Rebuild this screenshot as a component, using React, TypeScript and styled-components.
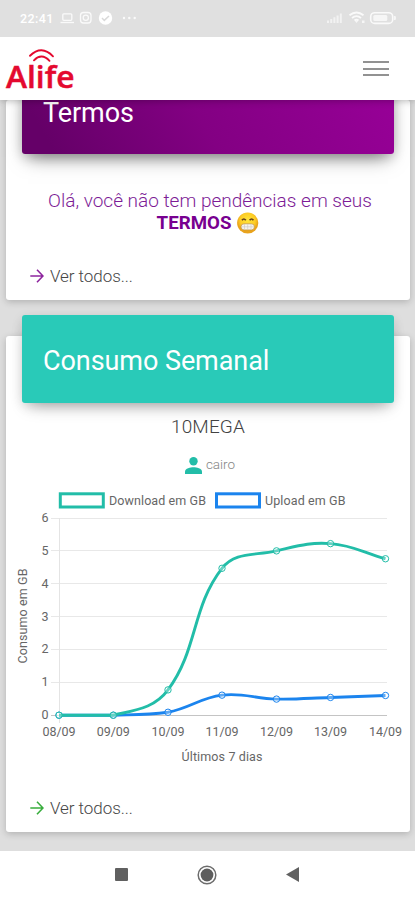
import React from 'react';
import styled, { createGlobalStyle } from 'styled-components';

const GlobalStyle = createGlobalStyle`
  * { box-sizing: border-box; }
  body { margin: 0; background: #fff; font-family: Roboto, sans-serif; }
  svg { display: block; flex: none; }
`;

const Screen = styled.div`
  width: 415px;
  height: 900px;
  display: flex;
  flex-direction: column;
  overflow: hidden;
  background: #dedede;
`;

const StatusBar = styled.div`
  position: relative;
  z-index: 3;
  height: 37px;
  flex: none;
  display: flex;
  align-items: center;
  justify-content: space-between;
  padding: 0 17px 1px 20px;
  background: #e0e0e0;
`;

const StatusGroup = styled.div<{ $gap: number }>`
  display: flex;
  align-items: center;
  gap: ${(p) => p.$gap}px;
`;

const Clock = styled.span`
  width: 34px;
  color: #fff;
  font-size: 12.5px;
  font-weight: 500;
  letter-spacing: 0.4px;
  white-space: nowrap;
`;

const Header = styled.header`
  position: relative;
  z-index: 2;
  height: 63px;
  flex: none;
  display: flex;
  align-items: center;
  justify-content: space-between;
  padding: 0 26px 0 4px;
  background: #fff;
  box-shadow: 0 1px 7px rgba(0, 0, 0, 0.27);
`;

const MenuButton = styled.button`
  display: flex;
  flex-direction: column;
  gap: 4.5px;
  width: 26px;
  padding: 0;
  border: 0;
  background: none;
`;

const MenuLine = styled.span`
  height: 2px;
  background: #929292;
`;

const Content = styled.main`
  height: 751px;
  flex: none;
  padding: 0 5px 0 6px;
  overflow: hidden;
`;

const Card = styled.section<{ $height: number; $gap?: number }>`
  height: ${(p) => p.$height}px;
  margin-top: ${(p) => p.$gap ?? 0}px;
  display: flex;
  flex-direction: column;
  background: #fff;
  border-radius: 3px;
  box-shadow: 0 2px 7px rgba(0, 0, 0, 0.2);
`;

const Banner = styled.div<{ $tone: 'purple' | 'teal' }>`
  height: ${(p) => (p.$tone === 'purple' ? 74 : 88)}px;
  flex: none;
  margin: ${(p) => (p.$tone === 'purple' ? -20 : -21)}px 16px 0;
  padding: ${(p) => (p.$tone === 'purple' ? 17 : 30)}px 21px 0;
  border-radius: 3px;
  color: #fff;
  background: ${(p) => (p.$tone === 'purple' ? 'linear-gradient(60deg, #650068 8%, #830083 48%, #960096 95%)' : '#29cab8')};
  box-shadow: ${(p) => (p.$tone === 'purple' ? '0 9px 18px -6px rgba(0,0,0,.5), 0 3px 12px rgba(0,0,0,.16)' : '0 8px 16px -7px rgba(0,0,0,.38), 0 3px 12px rgba(0,0,0,.1)')};
`;

const Title = styled.h2`
  margin: 0;
  font-size: 27px;
  line-height: 32px;
  font-weight: 400;
  letter-spacing: -0.07px;
`;

const Message = styled.p`
  margin: 36px 0 0;
  padding-left: 4px;
  color: #7d1c96;
  text-align: center;
  font-size: 19px;
  line-height: 22px;
  font-weight: 300;
  white-space: nowrap;
`;

const Strong = styled.span`
  display: flex;
  align-items: center;
  justify-content: center;
  gap: 5px;
  margin-left: -4px;
  font-size: 18.7px;
  font-weight: 700;
  color: #780090;
`;

const FooterLink = styled.a`
  display: flex;
  align-items: center;
  gap: 6px;
  height: 20px;
  margin: auto 24px 14px;
  color: #464646;
  font-size: 17px;
  font-weight: 300;
  letter-spacing: -0.05px;
`;

const Plan = styled.div`
  height: 24px;
  margin-top: 12px;
  text-align: center;
  color: #424242;
  font-size: 19px;
  line-height: 24px;
  font-weight: 300;
  letter-spacing: 0.1px;
`;

const User = styled.div`
  height: 24px;
  margin: 14px 0 11px;
  padding-left: 4px;
  display: flex;
  align-items: center;
  justify-content: center;
  gap: 4px;
  color: #858585;
  font-size: 13.5px;
  line-height: 20px;
`;

const UserName = styled.span`
  font-weight: 300;
  margin-top: -3px;
`;

const ChartText = styled.text`
  fill: #666;
  font-family: Roboto, sans-serif;
  font-size: 12.5px;
`;

const NavBar = styled.nav`
  height: 49px;
  flex: none;
  display: flex;
  justify-content: center;
  align-items: center;
  gap: 69px;
  padding: 0 1px 2px 0;
  background: #fff;
`;

const Arrow = ({ color }: { color: string }) => (
  <svg width="14" height="14" viewBox="0 0 14 14" fill="none" stroke={color} strokeWidth="1.6">
    <path d="M.3 7H12.8M7 .8L13 7l-6 6.2" />
  </svg>
);

const Logo = () => (
  <svg width="76" height="60" viewBox="4 39 76 60">
    <g fill="none" stroke="#e4092f" strokeWidth="1.9" strokeLinecap="round">
      <path d="M30 55.8Q41.5 44.5 53 56.3" />
      <path d="M34 60.3Q41.5 52.5 49.5 60.8" />
    </g>
    <text x="6" y="88" fill="#e4092f" stroke="#e4092f" strokeWidth=".5" fontFamily="'Open Sans', sans-serif" fontSize="31.5" fontWeight="600" textLength="68.5" lengthAdjust="spacingAndGlyphs">Alife</text>
  </svg>
);

const Grin = () => (
  <svg width="23" height="22" viewBox="0 0 23 22">
    <defs>
      <radialGradient id="face" cx="50%" cy="38%">
        <stop offset="0" stopColor="#ffe63a" />
        <stop offset=".7" stopColor="#fdcc24" />
        <stop offset="1" stopColor="#e9a31c" />
      </radialGradient>
    </defs>
    <circle cx="11.7" cy="11" r="10.6" fill="url(#face)" />
    <path d="M6 8.3q1.8-2.6 3.8 0M13.6 8.3q2-2.6 3.8 0" fill="none" stroke="#65401a" strokeWidth="1.7" />
    <rect x="5" y="11.8" width="13.4" height="6.1" rx="3" fill="#f6f4ed" stroke="#c3903c" strokeWidth=".7" />
    <path d="M5.5 14.8h12.4M8.5 12v5.7M11.7 12v5.7M15 12v5.7" stroke="#cbc8bf" strokeWidth=".6" />
  </svg>
);

const XS = [59, 113.3, 168, 222, 276.5, 330.5, 385.5];
const DAYS = ['08/09', '09/09', '10/09', '11/09', '12/09', '13/09', '14/09'];
const TOP = 518;
const BASE = 715.2;
const STEP = (BASE - TOP) / 6;
const DOWNLOAD = [0, 0, 0.77, 4.47, 5, 5.22, 4.76];
const UPLOAD = [0, 0, 0.09, 0.61, 0.49, 0.54, 0.6];
const toY = (v: number) => BASE - v * STEP;
const clampY = (y: number) => Math.max(TOP, Math.min(BASE, y));

// Smooth spline whose control points stay inside the plot area.
function curve(values: number[]) {
  const pts = values.map((v, i) => ({ x: XS[i], y: toY(v) }));
  const handles = pts.map((p, i) => {
    const a = pts[Math.max(0, i - 1)];
    const b = pts[Math.min(pts.length - 1, i + 1)];
    const d1 = Math.hypot(p.x - a.x, p.y - a.y);
    const d2 = Math.hypot(b.x - p.x, b.y - p.y);
    const f1 = (0.4 * d1) / (d1 + d2);
    const f2 = (0.4 * d2) / (d1 + d2);
    return {
      px: p.x - f1 * (b.x - a.x), py: clampY(p.y - f1 * (b.y - a.y)),
      nx: p.x + f2 * (b.x - a.x), ny: clampY(p.y + f2 * (b.y - a.y)),
    };
  });
  return pts.map((p, i) => i === 0 ? `M${p.x} ${p.y}` :
    `C${handles[i - 1].nx} ${handles[i - 1].ny} ${handles[i].px} ${handles[i].py} ${p.x} ${p.y}`).join('');
}

const Series = ({ values, color }: { values: number[]; color: string }) => (
  <g fill="none" stroke={color}>
    <path d={curve(values)} strokeWidth="2.9" />
    {values.map((v, i) => (
      <circle key={i} cx={XS[i]} cy={toY(v)} r="3.2" strokeWidth="1" fill="#fff" fillOpacity=".3" />
    ))}
  </g>
);

const Chart = () => (
  <svg width="404" height="285" viewBox="6 488 404 285">
    <rect x="60.3" y="493.8" width="43" height="13.2" fill="#fff" stroke="#22bda8" strokeWidth="3" />
    <ChartText x="109" y="504.5" textLength="97">Download em GB</ChartText>
    <rect x="216.5" y="493.8" width="43" height="13.2" fill="#fff" stroke="#1b84ee" strokeWidth="3" />
    <ChartText x="265" y="504.5" textLength="80.5">Upload em GB</ChartText>
    {[0, 1, 2, 3, 4, 5, 6].map((n) => (
      <g key={n}>
        <path d={`M51 ${Math.floor(toY(n))}.5H387`} stroke={n ? '#e8e8e8' : '#c4c4c4'} />
        <ChartText x="48.5" y={toY(n) + 4} textAnchor="end">{n}</ChartText>
      </g>
    ))}
    <path d="M59.5 518V723" stroke="#e4e4e4" />
    <Series values={UPLOAD} color="#1b84ee" />
    <Series values={DOWNLOAD} color="#22bda8" />
    {DAYS.map((d, i) => (
      <ChartText key={d} x={XS[i]} y="735.8" textAnchor="middle" textLength="33">{d}</ChartText>
    ))}
    <ChartText x="222" y="761" textAnchor="middle" textLength="81">Últimos 7 dias</ChartText>
    <ChartText transform="translate(27 616) rotate(-90)" textAnchor="middle" textLength="95">Consumo em GB</ChartText>
  </svg>
);

const StatusIcons = () => (
  <svg width="78" height="16" viewBox="60 10 78 16" fill="none" stroke="#fafafa" strokeWidth="1.3">
    <rect x="62.8" y="13.8" width="9" height="6.5" rx="1" />
    <path d="M60.5 22.5H74" />
    <rect x="80.5" y="12.5" width="10.5" height="10.5" rx="3" />
    <circle cx="85.8" cy="17.8" r="2.6" />
    <circle cx="105.5" cy="18" r="6.7" fill="#fff" stroke="none" />
    <path d="M102 18l2.3 2.4L109 16" stroke="#d9d9d9" strokeWidth="1.5" />
    <g fill="#fafafa" stroke="none">
      <circle cx="124" cy="18" r="1.2" />
      <circle cx="129.3" cy="18" r="1.2" />
      <circle cx="134.7" cy="18" r="1.2" />
    </g>
  </svg>
);

const ConnectionIcons = () => (
  <svg width="72" height="16" viewBox="327 10 72 16" fill="#f6f6f6">
    <path d="M328 20.5h2v2.5h-2zM331.2 19h2v4h-2zM334.4 17.3h2v5.7h-2zM337.6 15.5h2v7.5h-2zM340.8 13.5h2v9.5h-2z" opacity=".8" />
    <g fill="none" stroke="#fafafa" strokeWidth="1.8">
      <path d="M350.5 15.3q7-5.7 14 0M353 18q4.5-3.7 9 0M355.5 20.5q2-1.6 4 0" />
    </g>
    <path d="M356 21h3l-1.5 2zM363 20.5h2.5v2.5H363z" />
    <rect x="371.7" y="12.7" width="22" height="10.7" rx="4" fill="none" stroke="#fafafa" strokeWidth="1.6" />
    <rect x="374.3" y="15" width="14" height="6" rx="1.5" />
    <path d="M395 16h1.5q1 2 0 4H395z" />
  </svg>
);

export default function App() {
  return (
    <>
      <GlobalStyle />
      <Screen>
        <StatusBar>
          <StatusGroup $gap={6}>
            <Clock>22:41</Clock>
            <StatusIcons />
          </StatusGroup>
          <ConnectionIcons />
        </StatusBar>
        <Header>
          <Logo />
          <MenuButton aria-label="Menu">
            <MenuLine />
            <MenuLine />
            <MenuLine />
          </MenuButton>
        </Header>
        <Content>
          <Card $height={200}>
            <Banner $tone="purple">
              <Title>Termos</Title>
            </Banner>
            <Message>
              Olá, você não tem pendências em seus
              <Strong>TERMOS <Grin /></Strong>
            </Message>
            <FooterLink><Arrow color="#8d249e" />Ver todos...</FooterLink>
          </Card>
          <Card $height={496} $gap={36}>
            <Banner $tone="teal">
              <Title>Consumo Semanal</Title>
            </Banner>
            <Plan>10MEGA</Plan>
            <User>
              <svg width="17" height="17" viewBox="0 0 17 17" fill="#22bda8">
                <circle cx="8.5" cy="4.2" r="4.2" />
                <path d="M0 17v-2.5C0 11.5 5.5 10.3 8.5 10.3S17 11.5 17 14.5V17z" />
              </svg>
              <UserName>cairo</UserName>
            </User>
            <Chart />
            <FooterLink><Arrow color="#38ad3d" />Ver todos...</FooterLink>
          </Card>
        </Content>
        <NavBar>
          <svg width="13" height="13" viewBox="0 0 13 13"><rect width="13" height="13" rx="1" fill="#606060" /></svg>
          <svg width="20" height="20" viewBox="0 0 20 20">
            <circle cx="10" cy="10" r="8.8" fill="none" stroke="#6c6c6c" strokeWidth="1.5" />
            <circle cx="10" cy="10" r="6.4" fill="#5d5d5d" />
          </svg>
          <svg width="13" height="15" viewBox="0 0 13 15"><path d="M0 7.5L13 0v15z" fill="#606060" /></svg>
        </NavBar>
      </Screen>
    </>
  );
}
